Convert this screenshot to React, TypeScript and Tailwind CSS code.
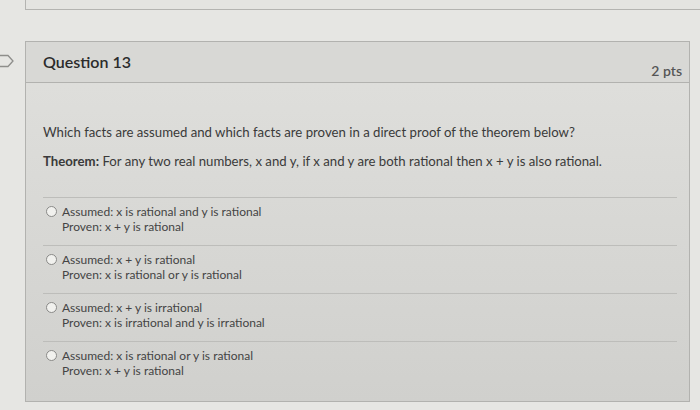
import React from 'react';

const answers = [
  { a: 'x is rational and y is rational', p: 'x + y is rational' },
  { a: 'x + y is rational', p: 'x is rational or y is rational' },
  { a: 'x + y is irrational', p: 'x is irrational and y is irrational' },
  { a: 'x is rational or y is rational', p: 'x + y is rational' },
];

const Flag = () => (
  <svg width="18" height="14" viewBox="0 0 18 14" className="mt-[13px] -ml-[3px]">
    <path d="M0 1.5 H11 L16 7 L11 12.5 H0" fill="none" stroke="#8e8e8b" strokeWidth="1.3" />
  </svg>
);

const Radio = () => (
  <span className="mt-[2px] h-[11px] w-[11px] shrink-0 rounded-full border border-[#8a8a88] bg-[#f1f1ee]" />
);

const App = () => {
  return (
    <div
      className="h-[410px] w-[700px] overflow-hidden bg-[#e6e6e3] text-[#333]"
      style={{ fontFamily: 'Lato, "Open Sans", sans-serif' }}
    >
      {/* previous question edge */}
      <div className="ml-[25px] h-[10px] border-b border-l border-[#b4b4b1] bg-[#e4e4e1]" />
      <div className="mt-[31px] flex">
        <div className="w-[25px] shrink-0">
          <Flag />
        </div>
        <div className="w-[665px] border border-[#b2b2af] bg-gradient-to-b from-[#e0e0dd] to-[#d0d0cd]">
          {/* header */}
          <div className="flex h-[41px] justify-between border-b border-[#b2b2af] bg-[#d8d8d5] pl-[17px] pr-[7px]">
            <span className="pt-[8px] text-[16px] font-semibold text-[#2b2b2b]">Question 13</span>
            <span className="pt-[18px] text-[14px] font-semibold text-[#555]">2 pts</span>
          </div>
          {/* body */}
          <div className="pb-[12px] pl-[17px] pr-[12px] pt-[39px]">
            <p className="text-[13.2px] leading-[20px] text-[#3a3a3a]">
              Which facts are assumed and which facts are proven in a direct proof of the theorem below?
            </p>
            <p className="mt-[9px] text-[13.2px] leading-[20px] text-[#3a3a3a]">
              <span className="font-bold">Theorem:</span> For any two real numbers, x and y, if x and y are
              both rational then x + y is also rational.
            </p>
            <div className="mt-[26px]">
              {answers.map((r, i) => (
                <div key={i} className="flex gap-[5px] border-t border-[#bdbdba] pb-[11px] pl-[3px] pt-[6px]">
                  <Radio />
                  <div className="text-[12px] leading-[15px] text-[#444]">
                    <div>Assumed: {r.a}</div>
                    <div>Proven: {r.p}</div>
                  </div>
                </div>
              ))}
            </div>
          </div>
        </div>
      </div>
    </div>
  );
};

export default App;
